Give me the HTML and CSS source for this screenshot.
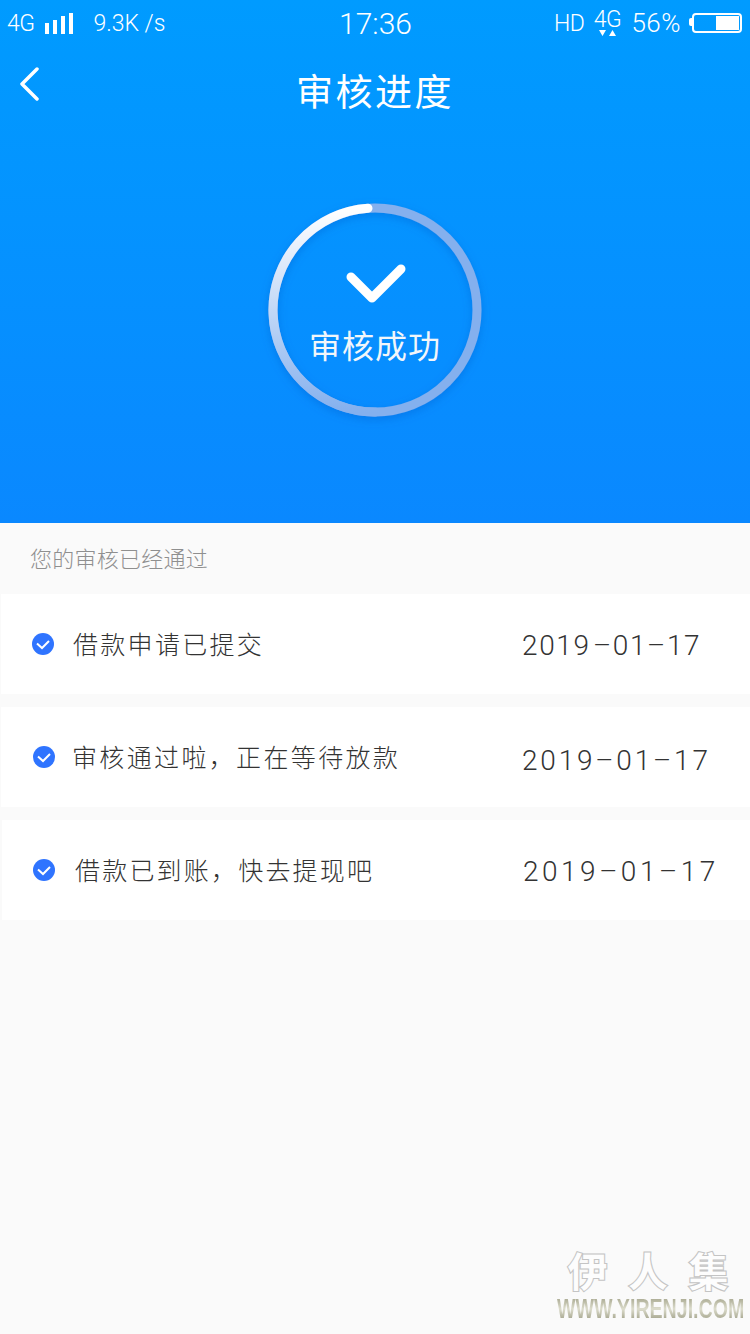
FILE: index.html
```html
<!DOCTYPE html>
<html>
    <head>
        <meta charset="utf-8">
        <meta name="viewport" content="width=device-width, initial-scale=1">
        <title>审核进度</title>
        <link rel="stylesheet" href="styles.css">
    </head>

    <body>
        <header class="hero">
            <div class="status">
                <div class="status-left">
                    <span>4G</span>
                    <span class="signal"><i></i><i></i><i></i><i></i></span>
                    <span class="speed">9.3K /s</span>
                </div>
                <div class="clock">17:36</div>
                <div class="status-right">
                    <span>HD</span>
                    <span class="net">4G
                        <svg width="17" height="6" viewBox="0 0 17 6"><path d="M0 0h7L3.500 6zM10 6h7L13.500 0z" fill="#fff"/></svg>
                    </span>
                    <span class="percent">56%</span>
                    <span class="battery"><b></b></span>
                </div>
            </div>

            <div class="nav">
                <svg class="back" width="22" height="34" viewBox="0 0 22 34"><path d="M19 2L4 17l15 15" fill="none" stroke="#fff" stroke-width="3.500" stroke-linecap="round" stroke-linejoin="round"/></svg>
                <h1>审核进度</h1>
            </div>

            <div class="ring">
                <svg class="ring-art" width="240" height="240" viewBox="0 0 240 240">
                    <defs>
                        <linearGradient id="fade" x1="0" y1="0" x2="0" y2="1">
                            <stop offset="0" stop-color="#fff"/>
                            <stop offset="1" stop-color="#84b0ee"/>
                        </linearGradient>
                        <filter id="soft" x="-20%" y="-20%" width="140%" height="140%">
                            <feDropShadow dx="0" dy="3" stdDeviation="4" flood-color="#1060d0" flood-opacity=".45"/>
                        </filter>
                    </defs>
                    <g filter="url(#soft)">
                        <circle cx="120" cy="120" r="102" fill="none" stroke="#84b0ee" stroke-width="9"/>
                        <path d="M120 222A102 102 0 0 1 113 18.240" fill="none" stroke="url(#fade)" stroke-width="9" stroke-linecap="round"/>
                    </g>
                </svg>
                <svg class="tick" width="60" height="40" viewBox="0 0 60 40"><path d="M5 13l21 21L55 5" fill="none" stroke="#fff" stroke-width="9" stroke-linecap="round" stroke-linejoin="round"/></svg>
                <div class="ring-text">审核成功</div>
            </div>
        </header>

        <div class="label">您的审核已经通过</div>

        <div class="steps">
            <div class="step step-one">
                <svg class="dot" width="22" height="22" viewBox="0 0 22 22"><circle cx="11" cy="11" r="11" fill="#2f74ff"/><path d="M5 10.500l5 4.500 7-7" fill="none" stroke="#fff" stroke-width="2"/></svg>
                <span class="step-name">借款申请已提交</span>
                <span class="step-date">2019 –01–17</span>
            </div>
            <div class="step step-two">
                <svg class="dot" width="22" height="22" viewBox="0 0 22 22"><circle cx="11" cy="11" r="11" fill="#2f74ff"/><path d="M5 10.500l5 4.500 7-7" fill="none" stroke="#fff" stroke-width="2"/></svg>
                <span class="step-name">审核通过啦，正在等待放款</span>
                <span class="step-date">2019–01–17</span>
            </div>
            <div class="step step-three">
                <svg class="dot" width="22" height="22" viewBox="0 0 22 22"><circle cx="11" cy="11" r="11" fill="#2f74ff"/><path d="M5 10.500l5 4.500 7-7" fill="none" stroke="#fff" stroke-width="2"/></svg>
                <span class="step-name">借款已到账，快去提现吧</span>
                <span class="step-date">2019–01–17</span>
            </div>
        </div>

        <div class="mark">
            <div class="mark-cn">伊人集</div>
            <div class="mark-en">WWW.YIRENJI.COM</div>
        </div>
    </body>
</html>
```

FILE: styles.css
```css
html {
    background-color: #fafafa;
}

body {
    margin: 0;
    height: 1334px;
    position: relative;
    overflow: hidden;
    font-family: "Noto Sans CJK SC", "Noto Sans", sans-serif;
    color: #333;
}

.hero {
    height: 523px;
    background: linear-gradient(#009bff, #0a88ff);
    color: #fff;
    display: flex;
    flex-direction: column;
}

.status {
    height: 46px;
    padding: 0 8px 0 7px;
    display: grid;
    grid-template-columns: 1fr auto 1fr;
    align-items: center;
    font-family: "Roboto", sans-serif;
    font-weight: 300;
    font-size: 23px;
    letter-spacing: -.5px;
}

.status-left, .status-right {
    display: flex;
    align-items: center;
}

.status-right {justify-content: flex-end}

.signal {
    display: flex;
    align-items: flex-end;
    gap: 4.300px;
    height: 21px;
    margin: 0 20px 0 10px;
}

.signal i {
    width: 4px;
    background: #fff;
}

.signal i:nth-child(1) {height: 11px}
.signal i:nth-child(2) {height: 14px}
.signal i:nth-child(3) {height: 18px}
.signal i:nth-child(4) {height: 21px}

.speed {letter-spacing: 0}

.clock {
    font-size: 30px;
    letter-spacing: 0;
    padding-left: 2px;
}

.net {
    width: 28px;
    margin: 0 10px 0 9px;
    display: flex;
    flex-direction: column;
    align-items: center;
    line-height: 19px;
    font-size: 23px;
}

.net svg {margin-top: 1px}

.percent {
    margin-right: 11px;
    letter-spacing: .5px;
    font-size: 26px;
}

.battery {
    border: 2px solid #fff;
    border-radius: 4px;
    padding: 1px;
    display: flex;
    justify-content: flex-end;
    position: relative;
    height: 14px;
    width: 44px;
}

.battery:before {
    content: "";
    position: absolute;
    left: -5px;
    top: 3px;
    width: 3px;
    height: 8px;
    background: #fff;
    border-radius: 2px 0 0 2px;
}

.battery b {
    width: 23px;
    background: #fff;
}

.nav {
    height: 92px;
    position: relative;
    display: flex;
    justify-content: center;
    align-items: center;
}

.back {
    position: absolute;
    left: 18px;
    top: 21px;
}

.nav h1 {
    margin: 0 0 4px 0;
    font-size: 37px;
    font-weight: 400;
    letter-spacing: 2.500px;
    line-height: 84px;
}

.ring {
    width: 214px;
    height: 214px;
    margin: 65px auto 0 auto;
    position: relative;
    display: flex;
    flex-direction: column;
    align-items: center;
}

.ring-art {
    position: absolute;
    left: -13px;
    top: -13px;
}

.tick {
    position: relative;
    margin: 61px 0 0 2px;
}

.ring-text {
    position: relative;
    margin-top: 16px;
    font-size: 32px;
    font-weight: 400;
    letter-spacing: 1px;
    line-height: 48px;
    color: #f2f6fa;
}

.label {
    height: 71px;
    padding-left: 30px;
    font-size: 22px;
    font-weight: 300;
    letter-spacing: .25px;
    line-height: 68px;
    color: #8f8f8f;
}

.steps {
    display: flex;
    flex-direction: column;
    gap: 13px;
}

.step {
    height: 100px;
    margin-left: 1px;
    background: #fff;
    display: flex;
    align-items: center;
    font-weight: 300;
}

.step-one {padding-left: 31px}
.step-two {padding-left: 32px}
.step-three {padding-left: 31px; margin-left: 2px}

.dot {flex: none}

.step-name {
    margin-left: 19px;
    padding-bottom: 2px;
    font-size: 25px;
    letter-spacing: 2.300px;
    color: #333;
    flex: 1;
}

.step-two .step-name {margin-left: 17px; letter-spacing: 2.350px}
.step-three .step-name {margin-left: 20px; letter-spacing: 2.200px}

.step-date {
    font-family: "Roboto", sans-serif;
    font-size: 28px;
    font-weight: 300;
    color: #333;
    padding-top: 2px;
    width: 228px;
    letter-spacing: 1.600px;
    word-spacing: -6px;
}

.step-two .step-date {letter-spacing: 2.800px; position: relative; top: 2px}
.step-three .step-date {width: 227px; letter-spacing: 3.500px}

/* watermark sits over the page corner */
.mark {
    position: absolute;
    left: 557px;
    top: 1248px;
    width: 193px;
}

.mark-cn {
    padding-left: 10px;
    font-weight: 900;
    font-size: 41px;
    line-height: 42px;
    letter-spacing: 19.500px;
    white-space: nowrap;
    color: #fdfdfd;
    -webkit-text-stroke: 1px #c4c4c4;
}

.mark-en {
    width: fit-content;
    margin-top: 3px;
    font-family: "Liberation Sans", sans-serif;
    font-weight: 700;
    font-size: 28px;
    line-height: 32px;
    white-space: nowrap;
    transform: scaleX(.7);
    transform-origin: left;
    background: linear-gradient(#fafafa 12%, #a8a890 14%, #dcdccc 50%, #a0a088 86%);
    -webkit-background-clip: text;
    background-clip: text;
    color: transparent;
}
```
